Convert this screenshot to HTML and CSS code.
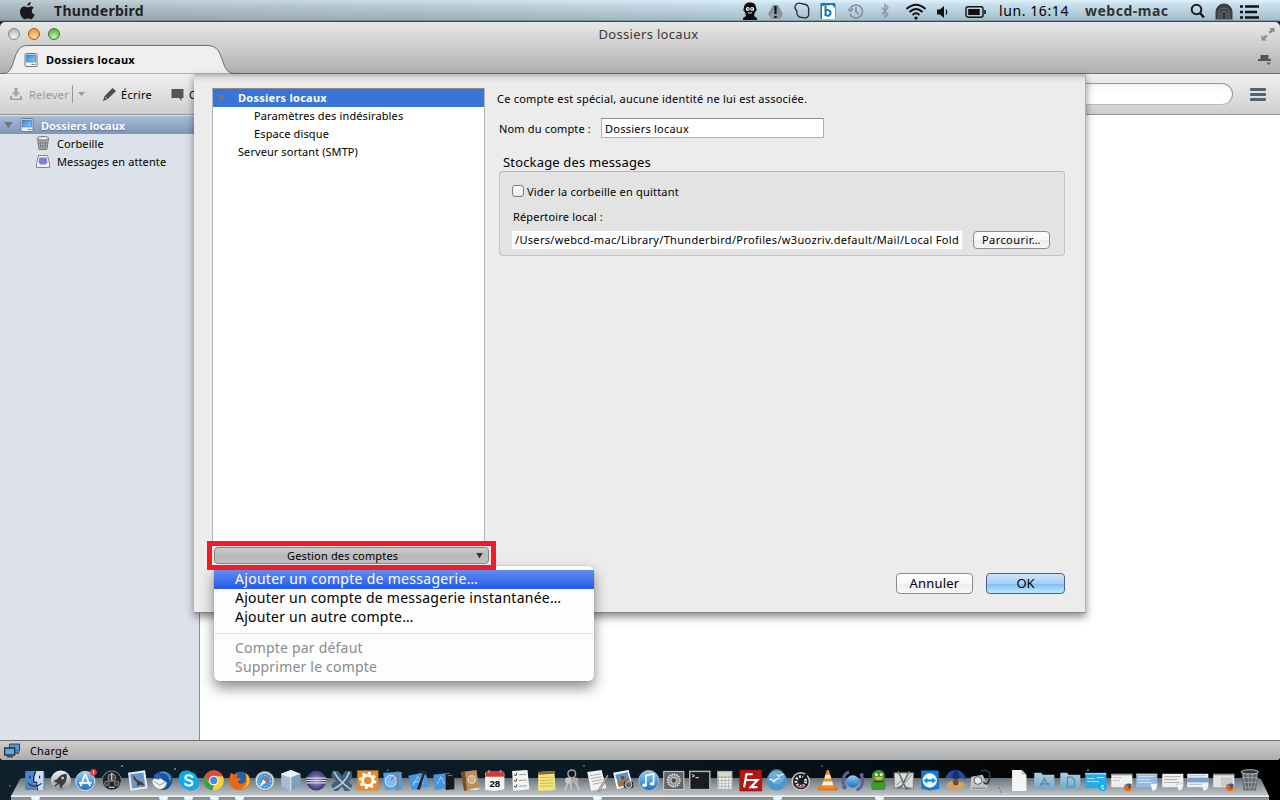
FILE: index.html
```
<!DOCTYPE html>
<html lang="fr">
<head>
  <meta charset="UTF-8">
  <meta name="viewport" content="width=device-width, initial-scale=1.0">
  <title>Dossiers locaux</title>
  <link rel="stylesheet" href="styles.css">
</head>
<body>
  <svg class="defs" width="0" height="0">
    <defs>
      <linearGradient id="gBlue" x1="0" y1="0" x2="0" y2="1"><stop offset="0" stop-color="#8fd0fb"/><stop offset="1" stop-color="#1b6fc4"/></linearGradient>
      <linearGradient id="gGrey" x1="0" y1="0" x2="0" y2="1"><stop offset="0" stop-color="#f2f2f2"/><stop offset="1" stop-color="#8b8f92"/></linearGradient>
      <linearGradient id="gScreen" x1="0" y1="0" x2="1" y2="1"><stop offset="0" stop-color="#2f86dc"/><stop offset="1" stop-color="#8ecbfa"/></linearGradient>
      <linearGradient id="gFolder" x1="0" y1="0" x2="0" y2="1"><stop offset="0" stop-color="#a9cfe3"/><stop offset="1" stop-color="#76a9c6"/></linearGradient>
      <radialGradient id="gPurple"><stop offset="0" stop-color="#a59fd0"/><stop offset="1" stop-color="#3b3170"/></radialGradient>
      <symbol id="local" viewBox="0 0 14 14">
        <rect x="1" y=".5" width="12" height="13" rx="1" fill="#f4f4f4" stroke="#777"/>
        <rect x="2.5" y="2" width="9" height="7" fill="url(#gScreen)" stroke="#2b6cb0" stroke-width=".6"/>
        <path d="M7.500 11.500h4" stroke="#888"/>
      </symbol>
      <symbol id="fox" viewBox="0 0 24 24">
        <circle cx="12.500" cy="12" r="9.500" fill="#1d5fae"/>
        <path d="M3 4l3 2c2-1 4-1 5 0-2 0-3 2-2 3l4 1c0 2-3 2-3 3 1 3 5 3 6 1 2 0 3-1 2-4 2-1 1-4-1-6 4 1 6 5 6 8 0 6-5 10-11 10S1 18 1 12c0-3 1-6 2-8z" fill="#e8690b"/>
        <path d="M18 5c3 2 5 5 4 9-1 4-5 7-9 7 5-2 8-6 5-16z" fill="#fbb92a"/>
      </symbol>
      <symbol id="bird" viewBox="0 0 24 24">
        <path d="M3 7c2-4 8-6 13-4 5 1 7 6 6 10-1 5-5 9-10 9-4 0-7-3-9-6z" fill="#1c539d"/>
        <path d="M9 4c5-1 10 2 10 7M13 3c5 1 7 5 7 9" stroke="#5fa2df" fill="none"/>
        <path d="M1 13c1-4 5-5 9-3l6 4c0 4-3 7-7 7-4-1-7-4-8-8z" fill="#f0f0f0"/>
        <path d="M3 13l6 4 6-4" fill="none" stroke="#999"/>
        <path d="M3 6c3-2 6-1 7 2L8 11 3 10z" fill="#2b65ad"/>
      </symbol>
    </defs>
  </svg>

  <div class="menubar">
    <svg class="apple" width="18" height="20" viewBox="0 0 18 20"><path d="M11.800 1c.2 2-1.500 3.800-3.400 3.800C8.200 3 9.900 1.200 11.800 1zM14.800 6.700c-3 1.800-2.500 5.700.8 7-1 2.500-2.400 4.500-3.900 4.500-1.100 0-1.500-.7-2.900-.7s-1.800.7-2.900.7C3.600 18.200 1 14.300 1 10.800 1 7.400 3.200 5.500 5.400 5.500c1.300 0 2.300.8 3.200.8.9 0 2-.9 3.500-.9 1.100 0 2.100.5 2.700 1.300z" fill="#161a1c"/></svg>
    <span class="app-name">Thunderbird</span>
    <div class="tray">
      <svg width="16" height="20" viewBox="0 0 16 20"><path d="M2 7C2 3 4.500 1.500 8 1.500S14 3 14 7c1 1 1 3-1 4l-1 4 3 2v2H1v-2l3-2-1-4C1 10 1 8 2 7z" fill="#0c0d0e"/><circle cx="5.800" cy="8" r="2" fill="#fff"/><circle cx="10.200" cy="8" r="2" fill="#fff"/><circle cx="6" cy="8" r=".8"/><circle cx="10" cy="8" r=".8"/><path d="M6 11.500q2 1.500 4 0" stroke="#ddd" fill="none"/></svg>
      <svg width="17" height="20" viewBox="0 0 17 20"><path d="M6 4h5l5 9-3 5H4l-3-5z" fill="#87949d"/><path d="M4 17l4-8 2 4" stroke="#a7b8c4" fill="none"/><path d="M8.500 5v8M8.500 15v2" stroke="#0c0d0e" stroke-width="2.200"/></svg>
      <svg width="18" height="20" viewBox="0 0 18 20"><path d="M3 3.500C5 1 8 2.500 10 3c5 0 6.500 4 5.500 8 1.500 4-2 7-5 5.500C5 17 3 13 4 10 1.500 8 1.500 5 3 3.500z" fill="none" stroke="#24292c" stroke-width="1.300"/></svg>
      <svg width="16" height="20" viewBox="0 0 16 20"><rect x=".5" y="2" width="15" height="16" rx="1" fill="#1777be"/><path d="M2 5l10-1 3 3v11H2z" fill="#fff"/><path d="M5.500 5v10M5.500 10.500c1-2 5-2 5 1.300s-4 3.800-5 1.500" fill="none" stroke="#1777be" stroke-width="2"/></svg>
      <svg class="clock" width="17" height="20" viewBox="0 0 17 20"><path d="M3 8a6.500 6.500 0 1 1 0 5M1 8l2.500 2.500L6 7.500M9 6v5l3 2" fill="none" stroke="#7e8c96" stroke-width="1.500"/></svg>
      <svg class="bt" width="9" height="20" viewBox="0 0 9 20"><path d="M1 6.500l6 7-3 3v-13l3 3-6 7" fill="none" stroke="#8896a0" stroke-width="1.200"/></svg>
      <svg class="wifi" width="22" height="20" viewBox="0 0 22 20"><path d="M1.500 8q9.500-8.500 19 0M4.500 11q6.500-6 13 0M7.500 14q3.500-3.500 7 0" fill="none" stroke="#111" stroke-width="2"/><circle cx="11" cy="17" r="1.600"/></svg>
      <svg class="vol" width="13" height="20" viewBox="0 0 13 20"><path d="M1 8.500h3L8 5v12l-4-3.500H1z" fill="#111"/><path d="M10 8.500q1.500 2.500 0 5" stroke="#111" fill="none" stroke-width="1.300"/></svg>
      <svg class="bat" width="21" height="20" viewBox="0 0 21 20"><rect x="1" y="5.700" width="17" height="10.500" rx="2" fill="none" stroke="#111" stroke-width="1.400"/><rect x="3.200" y="8" width="11.500" height="6" fill="#111"/><path d="M20 9v4" stroke="#111" stroke-width="1.600"/></svg>
      <span class="time">lun. 16:14</span>
      <span class="user">webcd-mac</span>
      <svg class="search-ico" width="16" height="20" viewBox="0 0 16 20"><circle cx="6.500" cy="8.500" r="4.800" fill="none" stroke="#1a1d1f" stroke-width="2"/><path d="M10 12l4 4.500" stroke="#1a1d1f" stroke-width="2.500"/></svg>
      <svg class="arch" width="18" height="20" viewBox="0 0 18 20"><path d="M.5 18.500V11a8.500 8.500 0 0 1 17 0v7.500z" fill="#3b4144"/><path d="M4 18v-6a5 5 0 0 1 10 0v6M6.500 18v-5.500a2.500 2.500 0 0 1 5 0V18" fill="none" stroke="#6b7276"/></svg>
      <svg class="list" width="21" height="20" viewBox="0 0 21 20"><path d="M1 5.500h3M1 11h3M1 16.500h3M6 5.500h14M6 11h12M6 16.500h14" stroke="#101214" stroke-width="2.700"/></svg>
    </div>
  </div>

  <div class="window">
    <div class="titlebar">
      <div class="lights"><i class="close"></i><i class="min"></i><i class="max"></i></div>
      <div class="title">Dossiers locaux</div>
      <svg class="expand" width="14" height="14" viewBox="0 0 14 14"><path d="M8 1h5.500v5L11.700 4.300 9.300 6.700 7.500 5 10 2.600zM6 13.500H.5V8l2 2L4.700 7.500 6.500 9.300 4 11.700z" fill="#8d8d8d"/></svg>
    </div>
    <div class="tabbar">
      <svg class="tab-shape" width="240" height="29" viewBox="0 0 240 29"><path d="M0 28.500h3C17 28.500 11 .5 27 .5H208C226 .5 219 28.500 234 28.500h6" fill="#efefef" stroke="#6e6e6e"/></svg>
      <svg class="tab-ico" width="14" height="14"><use href="#local"/></svg>
      <span class="tab-label">Dossiers locaux</span>
      <svg class="tab-list" width="14" height="11" viewBox="0 0 14 11"><path d="M2.500 1h8v4H13v2H0V5h2.500zM8.500 8.500H13L10.700 11z" fill="#555"/></svg>
    </div>
    <div class="toolbar">
      <svg class="relever-ico" width="14" height="13" viewBox="0 0 14 13"><path d="M5.500 0h3v4.500H11L7 8.500l-4-4h2.500zM1 8v4h12V8h-2v2.500H3V8z" fill="#a3a3a3"/></svg>
      <span class="relever">Relever</span>
      <span class="sep"></span>
      <svg class="caret" width="7" height="4" viewBox="0 0 7 4"><path d="M0 0h7L3.500 4z" fill="#999"/></svg>
      <svg class="pencil" width="13" height="13" viewBox="0 0 13 13"><path d="M9.500 0L13 3 4.500 11.300 0 13l1.300-4.500z" fill="#4c4c4c"/><path d="M2 9l2.500 2.300" stroke="#ccc"/></svg>
      <span class="ecrire">Écrire</span>
      <svg class="bubble" width="13" height="13" viewBox="0 0 13 13"><path d="M.5 1h12v9h-2v3L8 10H.5z" fill="#565656"/></svg>
      <span class="chat">Chat</span>
      <div class="searchbox"></div>
      <div class="burger"><i></i><i></i><i></i></div>
    </div>
    <div class="main">
      <div class="folders">
        <div class="folder selected"><i class="twisty"></i><svg width="14" height="14"><use href="#local"/></svg><b>Dossiers locaux</b></div>
        <div class="folder child"><svg width="14" height="14" viewBox="0 0 14 14"><path d="M1.500 2.500h11l-1.500 11H3z" fill="#bbb" stroke="#777"/><path d="M4 4l1 9M7 4v9M10 4L9 13M2 7h10M3 10h8" stroke="#666" stroke-width=".7"/><ellipse cx="7" cy="2.300" rx="5.700" ry="1.800" fill="#eee" stroke="#777"/></svg><span>Corbeille</span></div>
        <div class="folder child"><svg width="14" height="14" viewBox="0 0 14 14"><path d="M2.500 1.500h9l2 8v4H.5v-4z" fill="#f3f3f3" stroke="#858585"/><path d="M3.500 3.500h7l1 5-2 2h-5l-2-2z" fill="#7b7edb"/></svg><span>Messages en attente</span></div>
      </div>
      <div class="messages"></div>
    </div>
    <div class="statusbar">
      <svg width="16" height="15" viewBox="0 0 16 15"><path d="M5.500 1h10v7h-10z" fill="#4a9ae5" stroke="#3c4247"/><path d="M.7 5h10v7H.7z" fill="#5aa7ee" stroke="#2f3438" stroke-width="1.300"/><path d="M3 13.800h6M11 10h4" stroke="#444" stroke-width="1.400"/></svg>
      <span>Chargé</span>
    </div>
  </div>

  <div class="dialog">
    <div class="accounts">
      <div class="account active"><i class="twisty"></i>Dossiers locaux</div>
      <div class="account sub">Paramètres des indésirables</div>
      <div class="account sub space">Espace disque</div>
      <div class="account">Serveur sortant (SMTP)</div>
    </div>
    <div class="settings">
      <p class="intro">Ce compte est spécial, aucune identité ne lui est associée.</p>
      <div class="name-row">
        <label for="name">Nom du compte :</label>
        <input type="text" id="name" value="Dossiers locaux">
      </div>
      <h2>Stockage des messages</h2>
      <div class="group">
        <label class="check"><input type="checkbox"><span>Vider la corbeille en quittant</span></label>
        <div class="dir-label">Répertoire local :</div>
        <div class="dir-row">
          <div class="path">/Users/webcd-mac/Library/Thunderbird/Profiles/w3uozriv.default/Mail/Local Fold</div>
          <button class="small">Parcourir…</button>
        </div>
      </div>
      <div class="actions">
        <button>Annuler</button>
        <button class="ok">OK</button>
      </div>
    </div>
  </div>

  <div class="menu">
    <div class="item hover">Ajouter un compte de messagerie…</div>
    <div class="item">Ajouter un compte de messagerie instantanée…</div>
    <div class="item">Ajouter un autre compte…</div>
    <hr>
    <div class="item disabled">Compte par défaut</div>
    <div class="item disabled">Supprimer le compte</div>
  </div>

  <div class="highlight">
    <div class="manage"><span>Gestion des comptes</span><i></i></div>
  </div>

  <div class="dock">
    <svg class="shelf" width="1280" height="40" viewBox="0 0 1280 40">
      <defs><linearGradient id="gShelf" x1="0" y1="0" x2="0" y2="1"><stop offset="0" stop-color="#68727a"/><stop offset=".5" stop-color="#98a0a6"/><stop offset="1" stop-color="#c3c7ca"/></linearGradient></defs>
      <g fill="#8d9aa2"><circle cx="122" cy="6" r=".9"/><circle cx="175" cy="9" r=".9"/><circle cx="10" cy="26" r=".8"/><circle cx="388" cy="10" r=".8"/><circle cx="584" cy="6" r=".8"/><circle cx="822" cy="6" r=".8"/><circle cx="1088" cy="10" r=".9"/><circle cx="1204" cy="15" r=".7"/><circle cx="1035" cy="14" r=".6"/></g>
      <path d="M23 18H1258q3 0 4 3l7 15H11l8-15q1-3 4-3z" fill="url(#gShelf)"/>
      <path d="M11 36.500H1269" stroke="#f3f6f7" stroke-width="2"/>
      <path d="M11 38h1258v2H11z" fill="#8f9396"/>
      <path d="M998 23l3 11" stroke="#70767a" stroke-dasharray="2 2"/>
      <g fill="#e3f8ff"><rect x="31" y="36" width="9" height="4" rx="2"/><rect x="159" y="36" width="9" height="4" rx="2"/><rect x="184" y="36" width="9" height="4" rx="2"/><rect x="210" y="36" width="9" height="4" rx="2"/><rect x="235" y="36" width="9" height="4" rx="2"/><rect x="593" y="36" width="9" height="4" rx="2"/><rect x="773" y="36" width="9" height="4" rx="2"/><rect x="875" y="36" width="9" height="4" rx="2"/></g>
    </svg>
    <div class="icons">
      <svg viewBox="0 0 24 24"><rect x="2" y="2" width="20" height="20" rx="1" fill="#4e86c6"/><path d="M13 2h8v20h-7l-1-7h-2q0-8 2-13z" fill="#c9ddf0"/><path d="M7 7v3M17 7v3M5 15q7 6 14 0M13 2q-3 6-2 12h3q0 5 1 8" fill="none" stroke="#14243c" stroke-width="1.200"/></svg>
      <svg viewBox="0 0 24 24"><circle cx="12" cy="12" r="10.500" fill="url(#gGrey)"/><path d="M18 5c-5 0-8 3-10 6l-3 1 1 2h2l3 3v2l2 1 1-3c3-2 5-6 4-12z" fill="#3a3d40"/><circle cx="14" cy="9.500" r="1.500" fill="#ccc"/><path d="M6 18l3-3" stroke="#3a3d40" stroke-width="1.500"/></svg>
      <svg viewBox="0 0 24 24"><circle cx="11.500" cy="12.500" r="10" fill="url(#gBlue)" stroke="#dce6ee"/><path d="M11.500 5L6.500 18M11.500 5l5 13M5 14.500h13" stroke="#fff" stroke-width="2" fill="none"/><circle cx="20" cy="3.500" r="3.500" fill="#e43a35"/><path d="M20 1.500v3.500" stroke="#fff"/></svg>
      <svg viewBox="0 0 24 24"><circle cx="12" cy="12" r="10" fill="#1e2225" stroke="#8b9094"/><circle cx="12" cy="9" r="4" fill="#3d4246" stroke="#ddd" stroke-width=".6"/><circle cx="7" cy="15" r="2.500" fill="#444" stroke="#bbb" stroke-width=".6"/><circle cx="17" cy="15" r="2.500" fill="#444" stroke="#bbb" stroke-width=".6"/><path d="M12 12V4M9 19h6" stroke="#fff"/></svg>
      <svg viewBox="0 0 24 24"><g transform="rotate(-8 12 12)"><rect x="3" y="2.500" width="18" height="19" fill="#ecf0f2"/><rect x="5" y="4.500" width="14" height="15" fill="#6d95cb"/><path d="M8 5l3 6 6 4 1 3-5-1-3 1 1-4-3-4z" fill="#4b3b2b"/></g></svg>
      <svg viewBox="0 0 24 24"><use href="#bird"/></svg>
      <svg viewBox="0 0 24 24"><rect x="1.500" y="1.500" width="16" height="16" rx="7.500" fill="#0aaaed"/><rect x="6.500" y="6.500" width="16" height="16" rx="7.500" fill="#0aaaed"/><circle cx="12" cy="12" r="9.500" fill="#0aaaed"/><path d="M15.800 8.200C14 5.700 8.500 6 8.500 9c0 3.500 7.300 2 7.300 5.700 0 3.300-6 3.500-7.800.6" fill="none" stroke="#fff" stroke-width="2.300" stroke-linecap="round"/></svg>
      <svg viewBox="0 0 24 24"><circle cx="12" cy="12" r="10.500" fill="#f9cf32"/><path d="M2.500 7.500A10.500 10.500 0 0 1 21.500 7.500H12l-5 6z" fill="#dd4b3e"/><path d="M2.500 7.300L8 16l4 1-1.500 5.500A10.500 10.500 0 0 1 2.500 7.300z" fill="#38a154"/><circle cx="12" cy="12" r="5" fill="#fff"/><circle cx="12" cy="12" r="3.800" fill="#4387e8"/></svg>
      <svg viewBox="0 0 24 24"><use href="#fox"/></svg>
      <svg viewBox="0 0 24 24"><circle cx="12" cy="12.500" r="10" fill="#dfe4e8" stroke="#848c92"/><circle cx="12" cy="12.500" r="8" fill="#3f95da"/><circle cx="12" cy="12.500" r="6" fill="none" stroke="#cfe7f8" stroke-width="1.200" stroke-dasharray="1 2"/><path d="M18 6l-4.500 8-3-3z" fill="#e65a43"/><path d="M6 19l4.500-8 3 3z" fill="#fff"/></svg>
      <svg viewBox="0 0 24 24"><path d="M12 1l10 4v13l-10 5-10-5V5z" fill="#a4bdd4"/><path d="M12 1l10 4-10 4L2 5z" fill="#eaf3f8"/><path d="M12 9l10-4v13l-10 5z" fill="#7f9fbe"/><path d="M2 5l10 4v14" fill="none" stroke="#e4eef6"/></svg>
      <svg viewBox="0 0 24 24"><circle cx="12.500" cy="12" r="10.500" fill="url(#gPurple)"/><path d="M2 9.500h21M2 12h21M2 14.500h21" stroke="#d8d5ee" stroke-width="1.100"/></svg>
      <svg viewBox="0 0 24 24"><path d="M2 2h6l4 5 4-5h6l1 6-4 5 4 4-3 6h-5l-3-5-4 5H4l-3-6 5-5-5-4z" fill="#3f617c"/><path d="M4 3c4 8 10 13 17 18M20 3C17 11 12 17 3 21" stroke="#b7cad8" stroke-width="1.600" fill="none"/></svg>
      <svg viewBox="0 0 24 24"><rect x="1" y="1.500" width="22" height="21" fill="#ee8822"/><circle cx="12" cy="12" r="5.500" fill="none" stroke="#fff" stroke-width="3"/><circle cx="12" cy="12" r="7.800" fill="none" stroke="#fff" stroke-width="2.500" stroke-dasharray="3 3.120"/></svg>
      <svg viewBox="0 0 24 24"><path d="M2 4l19-1 1 18-18 1z" fill="#549fe3"/><circle cx="10" cy="12.500" r="6" fill="#7dbcf0" stroke="#d4ebfb"/><path d="M10 12l3-4" stroke="#d33"/><path d="M15 3c3-1 6 0 7 2l-4-1v18l-2 1V5z" fill="#79838a"/></svg>
      <svg viewBox="0 0 24 24"><path d="M1 7l18-4 4 15-18 4z" fill="#4796df"/><path d="M6 17l5-9 6 8M6 14l11-2" stroke="#a9d3f6" fill="none"/><path d="M11 3c4-3 9-1 11 2l-4 1L13 22l-3-1 6-16z" fill="#23282d"/></svg>
      <svg viewBox="0 0 24 24"><path d="M1 6l17-2 2 15-17 3z" fill="#4796df"/><path d="M5 16l4-8 4 8" stroke="#a9d3f6" fill="none"/><path d="M14 5h9v16l-9 1z" fill="#17191b"/><path d="M16 7l5-.5" stroke="#777"/></svg>
      <svg viewBox="0 0 24 24"><path d="M3 3l16-2 3 20-16 2z" fill="#b98f5b"/><path d="M3 3l4-.5L9 22l-3 1z" fill="#70502d"/><path d="M17 22l5-1-.2-1.500-12 2z" fill="#eee"/><circle cx="14" cy="11" r="3.800" fill="none" stroke="#f0dfc4" stroke-width="1.300"/><circle cx="14" cy="11" r="1.500" fill="none" stroke="#f0dfc4"/></svg>
      <svg viewBox="0 0 24 24"><path d="M2 4h20v17l-10 2-10-1z" fill="#f6f6f6"/><path d="M3 2h18l1 6H2z" fill="#cf3d33"/><path d="M6 1v3M18 1v3" stroke="#aaa" stroke-width="1.500"/><text x="12" y="19" text-anchor="middle" class="day">28</text></svg>
      <svg viewBox="0 0 24 24"><path d="M3 2l16-1 2 20-17 2z" fill="#f4f4f2"/><path d="M5 6l2 1 1-3M5 12l2 1 1-3M5 18l2 1 1-3" stroke="#333" fill="none"/><path d="M10 6l8-.5M10 12l8-.5M10 18l8-.5" stroke="#999"/></svg>
      <svg viewBox="0 0 24 24"><path d="M3 3l17-1 1 20-18 1z" fill="#f3e77b"/><path d="M3 3l17-1v3L3 6z" fill="#8b6336"/><path d="M5 9l14-.5M5 12l14-.5M5 15l14-.5M5 18l14-.5" stroke="#b9a951" stroke-width=".8"/></svg>
      <svg viewBox="0 0 24 24"><circle cx="12" cy="5" r="4" fill="none" stroke="#aaa" stroke-width="1.500"/><circle cx="8.500" cy="12" r="3.500" fill="#c9c9c7"/><circle cx="15.500" cy="12" r="3.500" fill="#aaa"/><path d="M8 14L5 22M11 13v9M16 14l4 8" stroke="#c2c2c2" stroke-width="2"/></svg>
      <svg viewBox="0 0 24 24"><path d="M1 3l15-2 5 19-16 3z" fill="#f2f2f2"/><path d="M4 7l11-2M5 10l11-2M6 13l11-2M7 16l9-2" stroke="#999" stroke-width=".8"/><path d="M22 6l1 1-8 15-2 1v-2z" fill="#c5c5c5" stroke="#555" stroke-width=".6"/></svg>
      <svg viewBox="0 0 24 24"><path d="M2 4l16-3 4 15-16 5z" fill="#fff"/><path d="M4 6l13-3 3 11-12 4z" fill="#5f91cc"/><path d="M6 13l12-4 2 6-12 4z" fill="#9b7450"/><circle cx="12" cy="9" r="2" fill="#6b4535"/><rect x="13" y="13" width="10" height="7" rx="2" fill="#222"/><circle cx="18" cy="16.500" r="3.500" fill="#666" stroke="#ddd"/></svg>
      <svg viewBox="0 0 24 24"><circle cx="12" cy="12" r="10.500" fill="url(#gBlue)" stroke="#aeb7bf"/><path d="M9 17V7l8-2v10" fill="none" stroke="#fff" stroke-width="1.700"/><ellipse cx="7.500" cy="17" rx="2.500" ry="1.800" fill="#fff"/><ellipse cx="15.500" cy="15.500" rx="2.500" ry="1.800" fill="#fff"/></svg>
      <svg viewBox="0 0 24 24"><rect x="1.500" y="2.500" width="21" height="19" fill="#62666a" stroke="#d2d4d6"/><circle cx="12" cy="12" r="6.500" fill="#999" stroke="#ededed" stroke-width="1.500" stroke-dasharray="1.500 1"/><circle cx="12" cy="12" r="3" fill="#4b4e51" stroke="#ddd"/></svg>
      <svg viewBox="0 0 24 24"><rect x="1.500" y="2.500" width="21" height="19" fill="#1b1c1e" stroke="#b4b6b8" stroke-width="1.500"/><path d="M4 5.500l2.500 1.500L4 8.500M7.500 9H11" stroke="#eee" fill="none"/></svg>
      <svg viewBox="0 0 24 24"><path d="M4 2h16v20H4z" fill="#b5b7b1"/><path d="M5.500 3.500h13v4h-13z" fill="#d6e0c9"/><path d="M6 10.500h13M6 13.500h13M6 16.500h13M6 19.500h13" stroke="#f0f0ee" stroke-width="2" stroke-dasharray="2.500 1"/></svg>
      <svg viewBox="0 0 24 24"><path d="M.5 1h23v22H.5z" fill="#b51513" stroke="#8d0b0b" stroke-dasharray="1 1"/><path d="M5 19L7.500 5.500H14M6.500 11.500H12M12 11.500h7l-7 7.500h7" fill="none" stroke="#fff" stroke-width="2.300"/></svg>
      <svg viewBox="0 0 24 24"><circle cx="12" cy="12" r="10.500" fill="#4a98cd"/><circle cx="12" cy="8" r="8" fill="#7db9de" opacity=".6"/><path d="M3 11q4-2 6 1 3-4 8-2-5 0-8 4-2-3-6-3zM10 6q3-1 4 1 3-3 6-1-4 0-6 3-1-3-4-3z" fill="#fff"/></svg>
      <svg viewBox="0 0 24 24"><circle cx="11" cy="13" r="9" fill="#1f2123" stroke="#c6c8ca" stroke-width="1.500"/><circle cx="11" cy="13" r="5" fill="none" stroke="#e6e6e6" stroke-width="3" stroke-dasharray="2 1.500"/><path d="M7 17a5 5 0 0 0 8 0" stroke="#e34c6c" stroke-width="2" fill="none"/><path d="M11 13l9-11" stroke="#15171a" stroke-width="2.500"/></svg>
      <svg viewBox="0 0 24 24"><path d="M2 18h20l1 4.500H1z" fill="#e97b14"/><path d="M11 1h2l6 19H5z" fill="#f18d1e"/><path d="M9.700 6h4.600l1.200 4h-7zM7.500 13h9l1.200 4H6.300z" fill="#f3f3f0"/></svg>
      <svg viewBox="0 0 24 24"><circle cx="12" cy="13" r="6.500" fill="url(#gBlue)"/><path d="M8 3C1 6 0 15 5 20M5 20l-4-1M16 22c7-3 8-12 4-17M20 5l3 2" stroke="#53669b" stroke-width="3" fill="none"/></svg>
      <svg viewBox="0 0 24 24"><path d="M6 11c-3-4 0-10 6-10s8 6 5 10c3 3 3 8 1 11H5c-2-4-1-8 1-11z" fill="#3f9830"/><circle cx="9.500" cy="6" r="1.500" fill="#fff"/><circle cx="14.500" cy="6" r="1.500" fill="#fff"/><path d="M7 9q5-2 10 0l-3 3h-4z" fill="#e8b026"/><path d="M7 13h10" stroke="#235d1c" stroke-width="2"/></svg>
      <svg viewBox="0 0 24 24"><rect x="2" y="4" width="20" height="16" fill="#d9dbdc" stroke="#777"/><path d="M4 17l6-5 4 2 6-8" stroke="#5a9f68" fill="none"/><path d="M6 2l9 20M18 2L9 20M5 20l4-2M19 21l-5-2" stroke="#6c6f71" stroke-width="1.600"/></svg>
      <svg viewBox="0 0 24 24"><path d="M3 1.500h18l1 19-10 2-9-2z" fill="#127bd1"/><circle cx="12" cy="12" r="7.500" fill="#f4f9fd"/><path d="M5.500 12l4-3v2h5V9l4 3-4 3v-2h-5v2z" fill="#1681d7"/></svg>
      <svg viewBox="0 0 24 24"><path d="M1 10C3 3 8 1 12 1s9 3 11 10l-6-2-5 2-5-2z" fill="#2a4c9e"/><path d="M8 9c1-5 2-7 4-8 3 2 4 5 4 8l-4 2z" fill="#172f70"/><path d="M2 17c3-5 8-5 10-4s7-1 10 3l-3 5-8 2-6-2z" fill="#d2a268"/><circle cx="12" cy="14" r="3" fill="#72482b"/></svg>
      <svg viewBox="0 0 24 24"><path d="M2 8l12-2 5 12-1 4H1z" fill="#c1c3c5"/><circle cx="9" cy="12" r="4" fill="#eee" stroke="#555"/><path d="M3 20h14" stroke="#777"/><path d="M12 2c8-2 11 2 9 9-1 5-5 6-6 2" fill="none" stroke="#33373a" stroke-width="1.700"/></svg>
      <span class="gap"></span>
      <svg viewBox="0 0 24 24"><path d="M5 1h10l5 5v17H5z" fill="#f5f5f5"/><path d="M15 1v5h5z" fill="#c4c4c4"/></svg>
      <svg viewBox="0 0 24 24"><path d="M1 5q0-1 1-1h6l2 2h12v15H1z" fill="url(#gFolder)"/><path d="M12 9l-4 9M11 9l5 9M7 15.500h10" stroke="#5888a5" stroke-width="1.300"/></svg>
      <svg viewBox="0 0 24 24"><path d="M1 5q0-1 1-1h6l2 2h12v15H1z" fill="url(#gFolder)"/><path d="M8.500 8.500H13l3 3v7H8.500z" fill="none" stroke="#5888a5" stroke-width="1.200"/></svg>
      <svg viewBox="0 0 24 24"><path d="M1 4h22v16H1z" fill="#27abe6"/><path d="M1 5h22" stroke="#d7f0fb"/><path d="M3 10h8M3 13h12M13 9h8" stroke="#c8ecfb"/><circle cx="19" cy="19" r="4" fill="#0aaaed"/><path d="M20.500 17.500q-3-1-3 .6c0 1 3 .8 3 2s-2 1.200-3 .4" stroke="#fff" fill="none"/></svg>
      <svg viewBox="0 0 24 24"><path d="M1 5h22v14H1z" fill="#eceff0"/><path d="M1 6h22" stroke="#777"/><path d="M3 9h9M3 12h7" stroke="#c2c2c2"/><use href="#fox" x="14" y="14" width="10" height="10"/></svg>
      <svg viewBox="0 0 24 24"><path d="M1 5h22v14H1z" fill="#93b8e6"/><path d="M1 5.500h22" stroke="#ddd"/><path d="M3 8h17M3 11h13M3 14h15" stroke="#d8e7f8"/><path d="M16 16l7-1-1 6-4 2z" fill="#f5f5ed"/></svg>
      <svg viewBox="0 0 24 24"><path d="M1 5h22v14H1z" fill="#f0f0f0"/><path d="M3 8h17M3 11h14M3 14h16" stroke="#aaa"/><path d="M16 16l7-1-1 6-4 2z" fill="#f5f5ed" stroke="#aaa" stroke-width=".5"/></svg>
      <svg viewBox="0 0 24 24"><path d="M1 5h22v14H1z" fill="#eef1f5"/><path d="M1 9h22v5H1z" fill="#7b9fd4"/><path d="M2 7h19M3 16h14" stroke="#bbb"/><path d="M16 16l7-1-1 6-4 2z" fill="#f5f5ed"/></svg>
      <svg viewBox="0 0 24 24"><path d="M1 5h22v14H1z" fill="#e1e3e4"/><path d="M1 6h22" stroke="#777"/><path d="M9 9h12v9H9z" fill="#cacaca"/><use href="#fox" x="14" y="14" width="10" height="10"/></svg>
      <svg viewBox="0 0 24 24"><path d="M3.500 3h17l-2 19.500h-13z" fill="#62676a"/><path d="M5 5l3 17M10 5l1 17M15 5l-2 17M20 5l-4 17M4 9h16M5 14h14M6 19h12" stroke="#a7acaf" stroke-width=".8"/><ellipse cx="12" cy="3" rx="9" ry="2.200" fill="#2f3336" stroke="#c4c9cc"/></svg>
    </div>
  </div>
</body>
</html>
```
FILE: styles.css
```
* {
  box-sizing: border-box;
}
body {
  margin: 0;
  width: 1280px;
  height: 800px;
  overflow: hidden;
  position: relative;
  display: flex;
  flex-direction: column;
  background: #0b1a24;
  font-family: "Noto Sans", sans-serif;
  font-size: 11px;
  letter-spacing: 0.16px;
  color: #000;
}
svg {
  display: block;
  flex: none;
}
.defs {
  position: absolute;
}

/* barre de menus */
.menubar {
  height: 22px;
  flex: none;
  display: flex;
  align-items: center;
  padding-left: 19px;
  background: linear-gradient(to right, rgba(110, 110, 110, 0.3), rgba(110, 110, 110, 0.15) 35%, rgba(180, 220, 240, 0.1) 60%), linear-gradient(#e3f3fb 0, #cbe1ed 20%, #a3b9c5 92%, #25394a 96%);
  font-size: 14px;
  line-height: 20px;
}
.app-name {
  font-weight: bold;
  margin-left: 17px;
  letter-spacing: 0.3px;
  color: #222;
}
.tray {
  margin-left: auto;
  margin-right: 20px;
  display: flex;
  align-items: center;
}
.tray svg + svg {
  margin-left: 9px;
}
.tray .clock { margin-left: 11px; }
.tray .bt { margin-left: 17px; }
.tray .wifi { margin-left: 15px; }
.tray .vol { margin-left: 9px; }
.tray .bat { margin-left: 16px; }
.time {
  margin-left: 13px;
  width: 70px;
  letter-spacing: 0.59px;
  white-space: nowrap;
}
.user {
  margin-left: 16px;
  width: 84px;
  font-weight: bold;
  letter-spacing: 0.5px;
  color: #333;
}
.search-ico { margin-left: 21px; }
.tray .arch { margin-left: 9px; }
.tray .list { margin-left: 6px; }

/* fenêtre */
.window {
  height: 738px;
  flex: none;
  display: flex;
  flex-direction: column;
  border-radius: 5px 5px 4px 4px;
  overflow: hidden;
  background: linear-gradient(#e8e8e8, #b0b0b0 51px, #fff 52px);
}
.titlebar {
  height: 23px;
  flex: none;
  display: flex;
  align-items: center;
  padding: 0 5px 0 8px;
}
.lights {
  width: 60px;
  display: flex;
  gap: 8px;
}
.lights i {
  width: 12px;
  height: 12px;
  border-radius: 50%;
  border: 1px solid #858585;
  background: radial-gradient(circle at 50% 85%, #f6f6f6, #bdbdbd 75%);
}
.lights .min {
  border-color: #a65c1c;
  background: radial-gradient(circle at 50% 80%, #ffdf9c, #f39a3a 75%);
}
.lights .max {
  border-color: #3e7a2e;
  background: radial-gradient(circle at 50% 80%, #cdf5ab, #68b352 75%);
}
.title {
  flex: 1;
  text-align: center;
  padding-left: 4px;
  font-size: 13px;
  letter-spacing: 0.32px;
  color: #3a3a3a;
}
.expand {
  margin-left: 36px;
}
.tabbar {
  height: 29px;
  flex: none;
  display: flex;
  align-items: center;
  padding-right: 8px;
  background: linear-gradient(#6e6e6e, #6e6e6e) bottom / 100% 1px no-repeat;
}
.tab-shape {
  margin-right: -216px;
}
.tab-ico,
.tab-label {
  position: relative;
}
.tab-label {
  margin-left: 8px;
  font-weight: bold;
  letter-spacing: 0.26px;
}
.tab-list {
  margin-left: auto;
}
.toolbar {
  height: 41px;
  flex: none;
  display: flex;
  align-items: center;
  padding: 0 14px 0 9px;
  background: linear-gradient(#f0f0f0, #cfcfcf);
  border-bottom: 1px solid #949494;
}
.relever {
  margin-left: 6px;
  width: 43px;
  color: #999;
  letter-spacing: 0.26px;
}
.sep {
  width: 1px;
  height: 18px;
  background: #999;
}
.caret { margin-left: 5px; }
.pencil { margin-left: 18px; }
.ecrire {
  margin-left: 5px;
  width: 50px;
  letter-spacing: 0.28px;
}
.chat {
  margin-left: 5px;
}
.searchbox {
  width: 320px;
  height: 22px;
  margin-left: auto;
  border: 1px solid #999;
  border-bottom-color: #bbb;
  border-radius: 11px;
  background: linear-gradient(#f3f3f3, #fff 8px);
}
.burger {
  width: 16px;
  margin-left: 17px;
  display: flex;
  flex-direction: column;
  gap: 2px;
}
.burger i {
  height: 3px;
  border-radius: 1px;
  background: #55616b;
}
.main {
  flex: 1;
  display: flex;
}
.folders {
  width: 200px;
  background: #dde2ea;
  border-right: 1px solid #8d8d8d;
}
.folder {
  height: 18px;
  display: flex;
  align-items: center;
  gap: 7px;
  letter-spacing: 0.11px;
}
.folder.selected {
  margin-top: 1px;
  padding-left: 4px;
  gap: 0;
  color: #fff;
  letter-spacing: -0.07px;
  background: linear-gradient(#a9bcd8, #7f96b8);
}
.folder.selected b {
  margin-left: 7px;
  text-shadow: 0 1px 1px #5b7193;
}
.folder.selected svg {
  margin-left: 7px;
}
.folder.child {
  padding-left: 36px;
}
.twisty {
  width: 9px;
  height: 7px;
  background: #73777c;
  clip-path: polygon(0 0, 100% 0, 50% 100%);
}
.messages {
  flex: 1;
  background: #fff;
}
.statusbar {
  height: 20px;
  flex: none;
  display: flex;
  align-items: center;
  gap: 10px;
  padding-left: 4px;
  border-top: 1px solid #6f6f6f;
  background: linear-gradient(#cfcfcf, #acacac);
}

/* paramètres des comptes */
.dialog {
  position: absolute;
  left: 194px;
  top: 74px;
  width: 892px;
  height: 539px;
  display: flex;
  padding: 14px 20px 16px 18px;
  background: linear-gradient(#b5b5b5, #dedede 4px, #ececec 9px);
  border-right: 1px solid #b0b0b0;
  border-bottom: 1px solid #8a8a8a;
  box-shadow: 0 4px 8px rgba(0, 0, 0, 0.45);
}
.accounts {
  width: 274px;
  height: 470px;
  background: #fff;
  border: 1px solid #b5b5b5;
  border-top-color: #8b8b8b;
}
.account {
  height: 18px;
  line-height: 18px;
  padding-left: 25px;
  letter-spacing: 0.07px;
}
.account.sub {
  padding-left: 41px;
  letter-spacing: 0.13px;
}
.account.active {
  display: flex;
  align-items: center;
  padding-left: 4px;
  color: #fff;
  font-weight: bold;
  letter-spacing: 0.26px;
  background: #3875d7;
}
.account.active .twisty {
  margin-right: 12px;
}
.settings {
  flex: 1;
  display: flex;
  flex-direction: column;
  padding-left: 12px;
}
.intro {
  margin: 3px 0 0;
  line-height: 16px;
  letter-spacing: 0.22px;
}
.name-row {
  display: flex;
  align-items: center;
  margin-top: 11px;
  padding-left: 2px;
}
.name-row label {
  width: 102px;
}
.name-row input {
  width: 223px;
  height: 20px;
  padding: 0 3px;
  border: 1px solid #b0b0b0;
  border-top-color: #8f8f8f;
  font: inherit;
  letter-spacing: 0.23px;
}
h2 {
  margin: 15px 0 0 6px;
  font-size: 13px;
  font-weight: normal;
  line-height: 18px;
  letter-spacing: 0.16px;
}
.group {
  width: 566px;
  height: 85px;
  margin: 0 0 0 2px;
  padding: 11px 14px 0 13px;
  background: #e3e3e3;
  border: 1px solid #c3c3c3;
  border-top-color: #b3b3b3;
  border-radius: 4px;
}
.check {
  display: flex;
  align-items: center;
  height: 16px;
  letter-spacing: 0.2px;
}
.check input {
  appearance: none;
  width: 12px;
  height: 12px;
  margin: 0 3px 0 -1px;
  border: 1px solid #7d7d7d;
  border-radius: 3px;
  background: linear-gradient(#fff, #ececec);
}
.dir-label {
  margin-top: 10px;
  line-height: 16px;
}
.dir-row {
  display: flex;
  align-items: center;
  justify-content: space-between;
  margin-top: 6px;
}
.path {
  width: 450px;
  height: 18px;
  margin-left: -1px;
  line-height: 18px;
  padding-left: 3px;
  background: #fff;
  letter-spacing: 0.32px;
  white-space: nowrap;
}
button {
  height: 21px;
  padding: 0;
  font: inherit;
  font-size: 13px;
  letter-spacing: 0.2px;
  line-height: 19px;
  border: 1px solid #8c8c8c;
  border-radius: 4px;
  background: linear-gradient(#fff, #f7f7f7 50%, #ececec 50%, #f8f8f8);
}
button.small {
  width: 77px;
  height: 18px;
  font-size: 11px;
  letter-spacing: 0.42px;
  line-height: 16px;
}
.actions {
  margin-top: auto;
  display: flex;
  justify-content: flex-end;
  gap: 13px;
  padding-bottom: 2px;
}
.actions button {
  width: 77px;
}
.actions .ok {
  width: 79px;
  letter-spacing: 0;
  border-color: #4d5c98;
  background: linear-gradient(#d3e5f8, #a5cff5 50%, #79bbf3 50%, #bfeafd);
}

/* menu et bouton entouré */
.menu {
  position: absolute;
  left: 214px;
  top: 566px;
  width: 380px;
  height: 115px;
  padding-top: 4px;
  background: #fdfdfd;
  border-radius: 5px;
  box-shadow: 0 0 1px rgba(0, 0, 0, 0.5), 0 7px 14px rgba(0, 0, 0, 0.45);
}
.item {
  height: 19px;
  line-height: 18px;
  padding-left: 21px;
  font-size: 14px;
  letter-spacing: 0.25px;
  white-space: nowrap;
}
.item.hover {
  color: #fff;
  letter-spacing: 0.29px;
  background: linear-gradient(#648cf1, #2159ea);
}
.item.disabled {
  color: #8b8b8b;
  letter-spacing: 0.2px;
}
.menu hr {
  height: 1px;
  margin: 6px 1px 5px;
  border: 0;
  background: #dedede;
}
.highlight {
  position: absolute;
  left: 207px;
  top: 541px;
  width: 289px;
  height: 29px;
  padding: 1px 2px;
  border: 5px solid #ee1c25;
  background: #e6e6e6;
}
.manage {
  height: 17px;
  display: flex;
  align-items: center;
  border: 1px solid #858585;
  border-radius: 4px;
  background: linear-gradient(#cdcdcd, #b9b9b9 50%, #c1c1c1);
}
.manage span {
  margin-left: 72px;
}
.manage i {
  width: 7px;
  height: 6px;
  margin-left: auto;
  margin-right: 5px;
  background: #333;
  clip-path: polygon(0 0, 100% 0, 50% 100%);
}

/* dock */
.dock {
  height: 40px;
  flex: none;
  position: relative;
  background: linear-gradient(to right, #0d202c, #0a1821 50%, #030507 80%, #000);
}
.shelf {
  position: absolute;
  left: 0;
  top: 0;
}
.icons {
  position: relative;
  display: flex;
  padding: 9px 0 0 22.3px;
}
.icons svg {
  width: 25.57px;
  height: 23px;
}
.gap {
  width: 12.8px;
}
.day {
  font: bold 10px "Liberation Sans", sans-serif;
  letter-spacing: 0;
}
```
